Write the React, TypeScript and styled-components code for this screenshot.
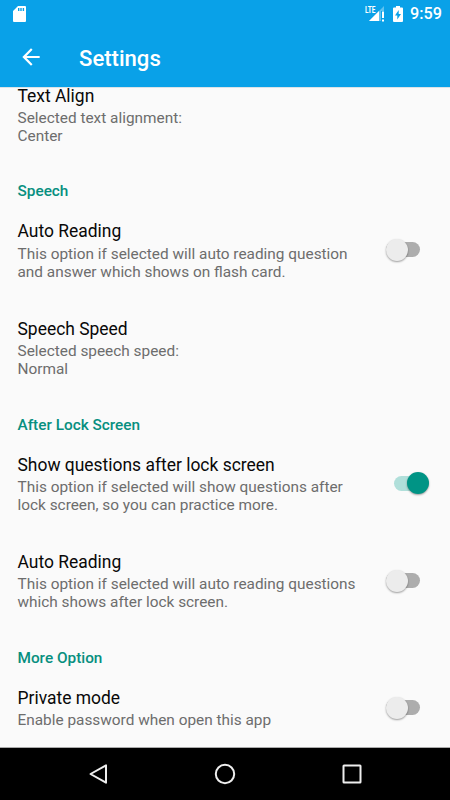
import React from "react";
import styled, { createGlobalStyle } from "styled-components";

const GlobalStyle = createGlobalStyle`
  * { box-sizing: border-box; }
  body { margin: 0; background: #fafafa; }
`;

const Screen = styled.div`
  width: 450px;
  height: 800px;
  display: flex;
  flex-direction: column;
  overflow: hidden;
  background: #fafafa;
  font-family: Roboto, sans-serif;
`;

const TopBar = styled.header`
  flex: none;
  height: 87px;
  background: #09a1e8;
  color: #fff;
  box-shadow: 0 1px 0 #d9e3e8;
  z-index: 1;
`;

const StatusBar = styled.div`
  height: 27px;
  display: flex;
  align-items: center;
  justify-content: space-between;
  padding: 0 10px 0 13px;
`;

const StatusIcons = styled.div`
  display: flex;
  align-items: center;
`;

const Clock = styled.span`
  width: 30px;
  margin-left: 7px;
  padding-top: 1px;
  font-size: 16.2px;
  font-weight: 500;
  line-height: 26px;
  white-space: nowrap;
`;

const Toolbar = styled.div`
  height: 60px;
  display: flex;
  align-items: center;
  padding-left: 18px;
`;

const PageTitle = styled.h1`
  margin: 1px 0 0 35px;
  font-size: 22.1px;
  font-weight: 500;
  line-height: 26px;
`;

const List = styled.main`
  flex: 1;
  min-height: 0;
  overflow: hidden;
`;

const Groups = styled.div`
  margin-top: -19.4px;
`;

const GroupTitle = styled.h2`
  height: 38.3px;
  margin: 0;
  padding: 17.4px 17.5px 0;
  color: #078f7f;
  font-size: 15.35px;
  font-weight: 500;
  line-height: 18px;
`;

const Row = styled.div`
  display: flex;
  align-items: center;
  justify-content: space-between;
  padding: 17px 20px 20.3px 17.5px;
`;

const RowTitle = styled.div`
  font-size: 17.45px;
  line-height: 22px;
  color: #080808;
  margin-bottom: 2.2px;
`;

const RowSummary = styled.div`
  font-size: 15.38px;
  line-height: 18px;
  color: #6d6d6d;
  white-space: pre-line;
`;

const Track = styled.div<{ $on: boolean }>`
  flex: none;
  width: 34px;
  height: 15px;
  margin: 0 ${(p) => (p.$on ? 2 : 10)}px 1px 0;
  border-radius: 8px;
  background: ${(p) => (p.$on ? "#b0dfda" : "#adadad")};
  display: flex;
  align-items: center;
  justify-content: ${(p) => (p.$on ? "flex-end" : "flex-start")};
`;

const Thumb = styled.div<{ $on: boolean }>`
  flex: none;
  width: 22px;
  height: 22px;
  margin: 0 ${(p) => (p.$on ? "-0.5px" : "0")} 0 ${(p) => (p.$on ? "0" : "-0.5px")};
  border-radius: 50%;
  background: ${(p) => (p.$on ? "#009485" : "#ececec")};
  box-shadow: 0 1px 2px rgba(0, 0, 0, 0.38);
`;

const NavBar = styled.footer`
  flex: none;
  height: 53px;
  border-top: 1px solid #aaa;
  background: #000;
  display: flex;
  align-items: center;
  justify-content: space-between;
  padding: 0 86px;
`;

type Setting = { title: string; summary: string; on?: boolean };
type Group = { heading?: string; settings: Setting[] };

const groups: Group[] = [
  { settings: [{ title: "Text Align", summary: "Selected text alignment:\nCenter" }] },
  {
    heading: "Speech",
    settings: [
      {
        title: "Auto Reading",
        summary: "This option if selected will auto reading question\nand answer which shows on flash card.",
        on: false,
      },
      { title: "Speech Speed", summary: "Selected speech speed:\nNormal" },
    ],
  },
  {
    heading: "After Lock Screen",
    settings: [
      {
        title: "Show questions after lock screen",
        summary: "This option if selected will show questions after\nlock screen, so you can practice more.",
        on: true,
      },
      {
        title: "Auto Reading",
        summary: "This option if selected will auto reading questions\nwhich shows after lock screen.",
        on: false,
      },
    ],
  },
  {
    heading: "More Option",
    settings: [{ title: "Private mode", summary: "Enable password when open this app", on: false }],
  },
];

const SdCardIcon = () => (
  <svg width="13" height="16" viewBox="0 0 13 16">
    <path
      fillRule="evenodd"
      fill="#fff"
      d="M5 0h7a1 1 0 0 1 1 1v14a1 1 0 0 1-1 1H1a1 1 0 0 1-1-1V5zM5 2v3h1.4V2zM7.3 2v3h1.4V2zM9.7 2v3h1.4V2z"
    />
  </svg>
);

const LteText = styled.text`
  font: 700 9px "Roboto", sans-serif;
`;

const SignalIcon = () => (
  <svg width="20" height="18" viewBox="0 0 20 18" fill="#fff">
    <path d="M4 16 19 1v5h-3v10z" fillOpacity="0.35" />
    <path d="M4 16 14 6v10z" />
    <path d="M17 6.500h2V13h-2zM17 14.500h2v2h-2z" />
    <LteText x="0" y="7.500" textLength="10.500" lengthAdjust="spacingAndGlyphs">LTE</LteText>
  </svg>
);

const BatteryIcon = () => (
  <svg width="10" height="16" viewBox="0 0 10 16">
    <path fill="#fff" d="M3 0h4v1.5h2a1 1 0 0 1 1 1V15a1 1 0 0 1-1 1H1a1 1 0 0 1-1-1V2.500a1 1 0 0 1 1-1h2z" />
    <path fill="#09a1e8" d="M5.700 4v4H8L4.300 13.500V9.500H2z" />
  </svg>
);

const ArrowBackIcon = () => (
  <svg width="26" height="26" viewBox="0 0 24 24">
    <path fill="#fff" d="M20 11H7.830l5.590-5.590L12 4l-8 8 8 8 1.410-1.410L7.830 13H20z" />
  </svg>
);

const StatusGap = styled.div`
  width: 8px;
`;

export default function App() {
  return (
    <Screen>
      <GlobalStyle />
      <TopBar>
        <StatusBar>
          <SdCardIcon />
          <StatusIcons>
            <SignalIcon />
            <StatusGap />
            <BatteryIcon />
            <Clock>9:59</Clock>
          </StatusIcons>
        </StatusBar>
        <Toolbar>
          <ArrowBackIcon />
          <PageTitle>Settings</PageTitle>
        </Toolbar>
      </TopBar>
      <List>
        <Groups>
          {groups.map((group, i) => (
            <section key={i}>
              {group.heading && <GroupTitle>{group.heading}</GroupTitle>}
              {group.settings.map((s) => (
                <Row key={s.title}>
                  <div>
                    <RowTitle>{s.title}</RowTitle>
                    <RowSummary>{s.summary}</RowSummary>
                  </div>
                  {s.on !== undefined && (
                    <Track $on={s.on}>
                      <Thumb $on={s.on} />
                    </Track>
                  )}
                </Row>
              ))}
            </section>
          ))}
        </Groups>
      </List>
      <NavBar>
        <svg width="24" height="24" viewBox="0 0 24 24">
          <path d="M20 3.300v17.400L4.500 12z" fill="none" stroke="#eee" strokeWidth="2" strokeLinejoin="round" />
        </svg>
        <svg width="24" height="24" viewBox="0 0 24 24">
          <circle cx="12" cy="12" r="9.200" fill="none" stroke="#eee" strokeWidth="2" />
        </svg>
        <svg width="24" height="24" viewBox="0 0 24 24">
          <rect x="3.500" y="3.500" width="17" height="17" rx="0.500" fill="none" stroke="#eee" strokeWidth="2" />
        </svg>
      </NavBar>
    </Screen>
  );
}
